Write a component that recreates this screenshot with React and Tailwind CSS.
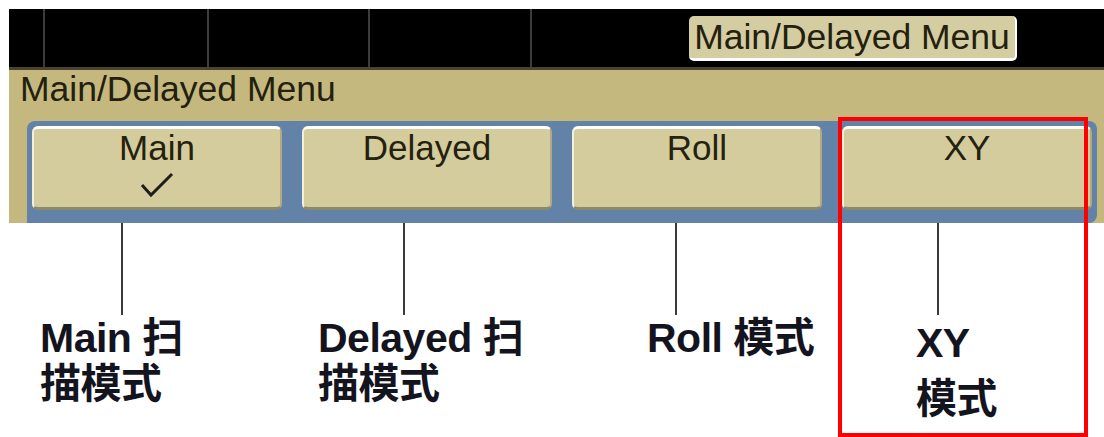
const buttons = [
  { name: "Main", checked: true },
  { name: "Delayed" },
  { name: "Roll" },
  { name: "XY" },
];

const labels = [
  { width: "w-[290px]", lineMl: "ml-[121px]", labelMl: "ml-[40px]", lines: ["Main 扫", "描模式"], leading: "leading-[46px]" },
  { width: "w-[330px]", lineMl: "ml-[113px]", labelMl: "ml-[28px]", lines: ["Delayed 扫", "描模式"], leading: "leading-[46px]" },
  { width: "w-[218px]", lineMl: "ml-[55px]", labelMl: "ml-[27px]", lines: ["Roll 模式"], leading: "leading-[46px]" },
  { width: "w-[266px]", lineMl: "ml-[99px]", labelMl: "ml-[78px]", lines: ["XY", "模式"], leading: "leading-[56px]" },
];

function SoftKey({ name, checked }) {
  return (
    <div className="w-[250px] h-[84px] rounded-[6px] bg-[#d5cc9e] border-t-[3px] border-l-[2px] border-t-white border-l-[#f4f0dc] border-b-[3px] border-r-[2px] border-b-[#8a8a6a] border-r-[#b0a983] flex flex-col items-center">
      <span className="text-[35px] leading-[38px] text-[#24220f]">{name}</span>
      {checked && (
        <svg width="36" height="28" viewBox="0 0 36 28" className="mt-[3px]">
          <path d="M3 15 L12 25 L33 4" fill="none" stroke="#1e1e1e" strokeWidth="3" />
        </svg>
      )}
    </div>
  );
}

export default function App() {
  return (
    <div
      className="w-[1104px] h-[437px] bg-white relative overflow-hidden"
      style={{ fontFamily: '"Liberation Sans", "Noto Sans CJK SC", sans-serif' }}
    >
      <div className="pt-[9px] pl-[9px]">
        {/* black display strip */}
        <div className="h-[58px] bg-black flex items-stretch">
          <div className="w-[36px] border-r-2 border-[#3c3c3c]" />
          <div className="w-[164px] border-r-2 border-[#3c3c3c]" />
          <div className="w-[161px] border-r-2 border-[#3c3c3c]" />
          <div className="w-[162px] border-r-2 border-[#3c3c3c]" />
          <div className="flex-1" />
          <div className="self-center mr-[87px] w-[328px] h-[45px] rounded-[5px] bg-[#d4cda2] border-b-[3px] border-r-[2px] border-white flex items-center justify-center">
            <span className="text-[35.5px] leading-[38px] text-[#24200e]">Main/Delayed Menu</span>
          </div>
        </div>

        {/* tan menu panel */}
        <div className="h-[156px] bg-[#c4b87f] border-t-[3px] border-[#4a4530] flex flex-col">
          <div className="pl-[11px] text-[35.5px] leading-[38px] text-[#24200e]">Main/Delayed Menu</div>
          <div className="mt-[13px] ml-[18px] mr-[7px] flex-1 bg-[#6382a8] rounded-t-[8px] rounded-br-[8px] pt-[5px] pl-[5px] flex gap-[20px]">
            {buttons.map((b) => (
              <SoftKey key={b.name} {...b} />
            ))}
          </div>
        </div>
      </div>

      {/* callouts */}
      <div className="flex">
        {labels.map((l, i) => (
          <div key={i} className={`${l.width} flex flex-col`}>
            <div className={`${l.lineMl} w-[2px] h-[92px] bg-[#3a3a3a]`} />
            <div className={`${l.labelMl} ${l.leading} text-[41px] font-bold text-[#14141e] tracking-[-0.5px]`}>
              {l.lines.map((t) => (
                <div key={t}>{t}</div>
              ))}
            </div>
          </div>
        ))}
      </div>

      {/* red highlight box */}
      <div className="absolute left-[838px] top-[117px] w-[250px] h-[320px] border-[4px] border-[#ff0000]" />
    </div>
  );
}
